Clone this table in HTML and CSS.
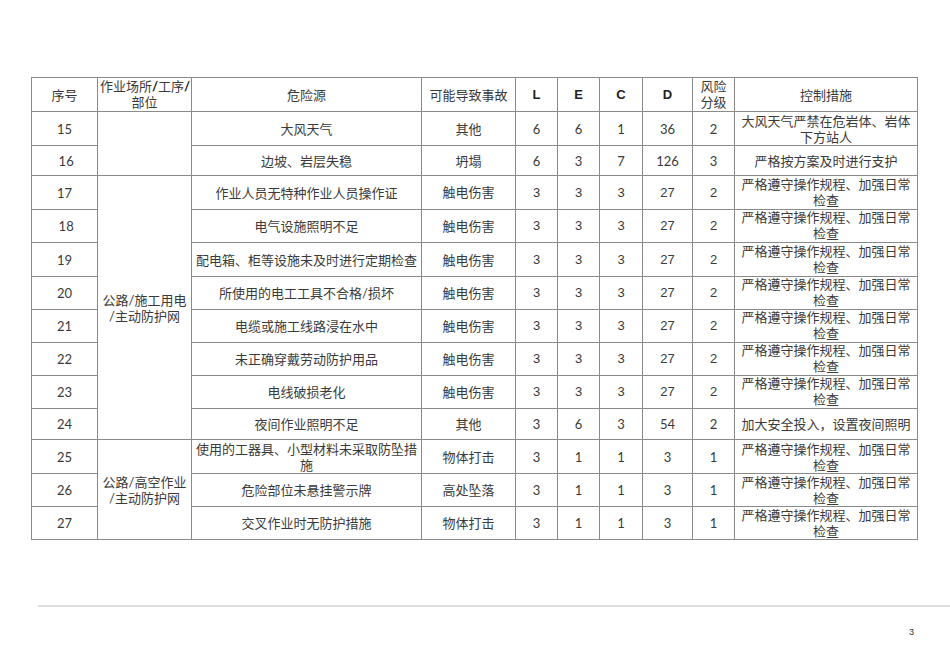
FILE: index.html
```html
<!DOCTYPE html>
<html lang="zh-CN">
<head>
<meta charset="utf-8">
<title>危险源辨识</title>
<link rel="stylesheet" href="styles.css">
</head>
<body>
<div class="page">
  <table class="risk">
    <colgroup>
      <col class="c-no"><col class="c-place"><col class="c-src"><col class="c-acc">
      <col class="c-l"><col class="c-e"><col class="c-c"><col class="c-d">
      <col class="c-lv"><col class="c-ctl">
    </colgroup>
    <thead>
      <tr class="h34">
        <th>序号</th>
        <th class="top">作业场所<span class="sl">/</span>工序<span class="sl">/</span><br>部位</th>
        <th>危险源</th>
        <th>可能导致事故</th>
        <th class="lat">L</th>
        <th class="lat">E</th>
        <th class="lat">C</th>
        <th class="lat">D</th>
        <th class="top">风险<br>分级</th>
        <th>控制措施</th>
      </tr>
    </thead>
    <tbody>
      <tr class="h34">
        <td>15</td>
        <td rowspan="2"></td>
        <td>大风天气</td><td>其他</td>
        <td>6</td><td>6</td><td>1</td><td>36</td><td>2</td>
        <td>大风天气严禁在危岩体、岩体<br>下方站人</td>
      </tr>
      <tr class="h30">
        <td>&nbsp;16</td>
        <td>边坡、岩层失稳</td><td>坍塌</td>
        <td>6</td><td>3</td><td>7</td><td>126</td><td>3</td>
        <td>严格按方案及时进行支护</td>
      </tr>
      <tr class="h34 ar">
        <td>17</td>
        <td rowspan="8">公路/施工用电<br>/主动防护网</td>
        <td>作业人员无特种作业人员操作证</td><td>触电伤害</td>
        <td>3</td><td>3</td><td>3</td><td>27</td><td>2</td>
        <td>严格遵守操作规程、加强日常<br>检查</td>
      </tr>
      <tr class="h32 ar">
        <td>&nbsp;18</td>
        <td>电气设施照明不足</td><td>触电伤害</td>
        <td>3</td><td>3</td><td>3</td><td>27</td><td>2</td>
        <td>严格遵守操作规程、加强日常<br>检查</td>
      </tr>
      <tr class="h34 ar">
        <td>19</td>
        <td>配电箱、柜等设施未及时进行定期检查</td><td>触电伤害</td>
        <td>3</td><td>3</td><td>3</td><td>27</td><td>2</td>
        <td>严格遵守操作规程、加强日常<br>检查</td>
      </tr>
      <tr class="h32 ar">
        <td>20</td>
        <td>所使用的电工工具不合格/损坏</td><td>触电伤害</td>
        <td>3</td><td>3</td><td>3</td><td>27</td><td>2</td>
        <td>严格遵守操作规程、加强日常<br>检查</td>
      </tr>
      <tr class="h33 ar">
        <td>21</td>
        <td>电缆或施工线路浸在水中</td><td>触电伤害</td>
        <td>3</td><td>3</td><td>3</td><td>27</td><td>2</td>
        <td>严格遵守操作规程、加强日常<br>检查</td>
      </tr>
      <tr class="h33 ar">
        <td>22</td>
        <td>未正确穿戴劳动防护用品</td><td>触电伤害</td>
        <td>3</td><td>3</td><td>3</td><td>27</td><td>2</td>
        <td>严格遵守操作规程、加强日常<br>检查</td>
      </tr>
      <tr class="h32 ar">
        <td>23</td>
        <td>电线破损老化</td><td>触电伤害</td>
        <td>3</td><td>3</td><td>3</td><td>27</td><td>2</td>
        <td>严格遵守操作规程、加强日常<br>检查</td>
      </tr>
      <tr class="h31">
        <td>24</td>
        <td>夜间作业照明不足</td><td>其他</td>
        <td>3</td><td>6</td><td>3</td><td>54</td><td>2</td>
        <td>加大安全投入，设置夜间照明</td>
      </tr>
      <tr class="h34">
        <td>25</td>
        <td rowspan="3">公路/高空作业<br>/主动防护网</td>
        <td>使用的工器具、小型材料未采取防坠措<br>施</td><td>物体打击</td>
        <td>3</td><td>1</td><td>1</td><td>3</td><td>1</td>
        <td>严格遵守操作规程、加强日常<br>检查</td>
      </tr>
      <tr class="h33">
        <td>26</td>
        <td>危险部位未悬挂警示牌</td><td>高处坠落</td>
        <td>3</td><td>1</td><td>1</td><td>3</td><td>1</td>
        <td>严格遵守操作规程、加强日常<br>检查</td>
      </tr>
      <tr class="h33">
        <td>27</td>
        <td>交叉作业时无防护措施</td><td>物体打击</td>
        <td>3</td><td>1</td><td>1</td><td>3</td><td>1</td>
        <td>严格遵守操作规程、加强日常<br>检查</td>
      </tr>
    </tbody>
  </table>
  <hr class="rule">
  <div class="footer"><span class="pnum">3</span></div>
</div>
</body>
</html>
```
FILE: styles.css
```css
html, body {
  margin: 0;
  padding: 0;
  background: #ffffff;
}

.page {
  padding: 77px 0 0 31px;
  font-family: "Lato", "Noto Sans CJK SC", sans-serif;
  color: #3a3a3a;
}

.risk {
  border-collapse: collapse;
  table-layout: fixed;
  width: 886px;
  font-size: 13px;
  line-height: 16px;
}

.c-no { width: 66px; }
.c-place { width: 94px; }
.c-src { width: 230px; }
.c-acc { width: 94px; }
.c-l { width: 42px; }
.c-e { width: 42px; }
.c-c { width: 43px; }
.c-d { width: 50px; }
.c-lv { width: 42px; }
.c-ctl { width: 183px; }

.risk th,
.risk td {
  border: 1px solid #8a8a8a;
  padding: 0 2px;
  text-align: center;
  vertical-align: middle;
  white-space: nowrap;
  overflow: hidden;
  font-weight: normal;
}

.risk th.top {
  vertical-align: top;
  line-height: 16px;
}

.risk th.lat {
  font-family: "Liberation Sans", sans-serif;
  font-weight: bold;
  color: #222222;
}

.sl {
  font-weight: bold;
  color: #222222;
}

.h30 { height: 30px; }
.h31 { height: 31px; }
.h32 { height: 32px; }
.h33 { height: 33px; }
.h34 { height: 34px; }
.h35 { height: 35px; }

.ar td:nth-child(n+4) {
  font-family: "Liberation Sans", "Noto Sans CJK SC", sans-serif;
}

.rule {
  margin: 65px 0 0 7px;
  border: 0;
  border-top: 2px solid #dedede;
  height: 0;
}

.footer {
  display: flex;
  justify-content: flex-end;
  padding: 20px 36px 0 0;
}

.pnum {
  font-family: "Liberation Sans", sans-serif;
  font-size: 9px;
  color: #333333;
}
```
